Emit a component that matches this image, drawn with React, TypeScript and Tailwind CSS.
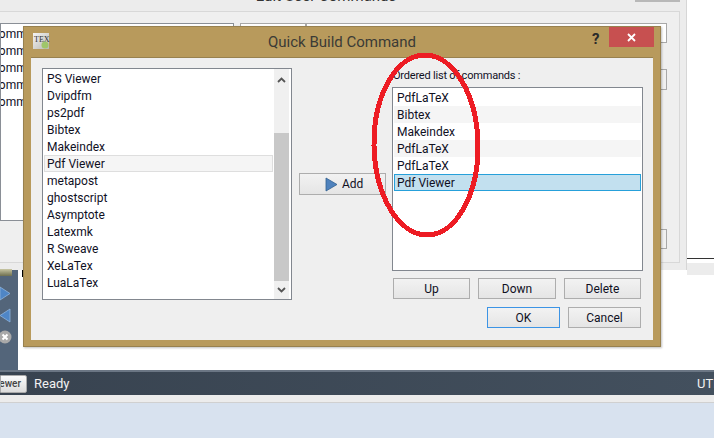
import React from 'react';

const FONT = "font-['Roboto','Noto_Sans',sans-serif]";

const AVAILABLE = ['PS Viewer', 'Dvipdfm', 'ps2pdf', 'Bibtex', 'Makeindex', 'Pdf Viewer', 'metapost', 'ghostscript', 'Asymptote', 'Latexmk', 'R Sweave', 'XeLaTex', 'LuaLaTex'];
const ORDERED = ['PdfLaTeX', 'Bibtex', 'Makeindex', 'PdfLaTeX', 'PdfLaTeX', 'Pdf Viewer'];

const Button = ({ label, className }: { label: string; className: string }) => (
  <button className={`flex items-center justify-center border bg-gradient-to-b from-[#f2f2f2] to-[#e5e5e5] text-[12px] text-[#10101f] ${className}`}>{label}</button>
);

const BackWindow = () => (
  <div className="relative flex h-[270px] w-[687px] flex-col border-r border-[#d6d6d6] bg-[#ececec]">
    <div className="relative flex h-[11px] items-end justify-center overflow-hidden pb-[5px] pr-[34px] text-[15px] leading-[20px] text-[#333]">
      <span>Edit User Commands</span>
      <div className="absolute right-[6px] top-0 h-[2px] w-[45px] bg-[#b8b8b8]" />
    </div>
    <div className="mr-[6px] h-[252px] border-r border-t border-b border-[#d8d8d8] bg-[#efefef] pt-[11px]">
      <div className="flex gap-[6px]">
        <div className="h-[198px] w-[234px] overflow-hidden border border-[#8a8f96] bg-white pt-[2px] text-[12px] text-[#10101f]">
          {[1, 2, 3, 4, 5].map((n) => (
            <div key={n} className="-ml-[10px] h-[17px] whitespace-nowrap leading-[17px]">Commands {n}</div>
          ))}
        </div>
        <div className="flex w-[427px] flex-col">
          <div className="flex h-[20px] gap-0">
            <div className="w-[66px] border border-[#a8a8a8] bg-white" />
            <div className="flex-1 border border-[#a8a8a8] bg-white" />
          </div>
          <div className="ml-auto mt-[26px] h-[21px] w-[100px] border border-[#a8a8a8] bg-[#f0f0f0]" />
          <div className="ml-auto mt-[139px] h-[20px] w-[100px] border border-[#a8a8a8] bg-[#f0f0f0]" />
        </div>
      </div>
    </div>
  </div>
);

const SidePanel = () => (
  <div className="relative flex h-[100px]">
    <div className="flex w-[18px] flex-col items-start gap-[7px] bg-[#53657a] pt-[16px]">
      <svg width="11" height="15" viewBox="0 0 11 15"><path d="M0 1 L10 7.5 L0 14 Z" fill="#4f86c6" stroke="#8fb4dd" strokeWidth="0.8" /></svg>
      <svg width="11" height="15" viewBox="0 0 11 15"><path d="M10 1 L0 7.5 L10 14 Z" fill="#4f86c6" stroke="#8fb4dd" strokeWidth="0.8" /></svg>
      <svg width="13" height="14" viewBox="0 0 13 14">
        <circle cx="5" cy="7" r="6.5" fill="#a9a9a9" />
        <path d="M2.5 4.5 L7.5 9.5 M7.5 4.5 L2.5 9.5" stroke="#fff" strokeWidth="2" />
      </svg>
    </div>
    <div className="flex-1 bg-white pl-[4px]">
      <div className="h-[7px] w-[1px] bg-black" />
    </div>
    <div className="absolute -top-[1px] left-0 h-[7px] w-[12px] bg-gradient-to-b from-[#c9c7a4] to-[#6f7050]" />
  </div>
);

const StatusBar = () => (
  <div className="flex h-[25px] items-center justify-between border-t-2 border-[#6b7684] bg-gradient-to-r from-[#384350] to-[#43505e] text-[14px] text-[#f2f2f2]">
    <div className="flex items-center">
      <div className="flex h-[18px] w-[27px] items-center justify-end overflow-hidden rounded-r-[2px] border border-[#aaa] bg-gradient-to-b from-[#fbfbfb] to-[#dcdcdc] pr-[5px] text-[10px] font-medium text-[#444]">
        <span className="whitespace-nowrap">Viewer</span>
      </div>
      <span className="ml-[7px] text-[13px]">Ready</span>
    </div>
    <span className="w-[17px] overflow-hidden whitespace-nowrap text-[13px]">UTF-8</span>
  </div>
);

const Dialog = () => (
  <div className="absolute left-[23px] top-[26px] flex h-[321px] w-[638px] flex-col border border-[#98814f] bg-[#b89a5c] shadow-[1px_1px_2px_rgba(0,0,0,0.25)]">
    <div className="relative flex h-[30px] items-center justify-center text-[15px] text-[#3b3b36]">
      <svg width="17" height="17" viewBox="0 0 17 17" className="absolute left-[9px] top-[6px]">
        <defs>
          <linearGradient id="texBg" x1="0" y1="0" x2="1" y2="1">
            <stop offset="0" stopColor="#f4f4f4" />
            <stop offset="1" stopColor="#b9b9b2" />
          </linearGradient>
        </defs>
        <rect width="16" height="16" fill="url(#texBg)" />
        <text x="1" y="9" fontSize="8" fontFamily="'Liberation Serif', serif" fill="#333">TEX</text>
        <circle cx="12" cy="12" r="3.5" fill="#9fc66a" />
      </svg>
      <span>Quick Build Command</span>
      <span className="absolute left-[568px] top-[1px] text-[15px] font-bold text-[#2a2a2a]">?</span>
      <div className="absolute right-[6px] top-0 flex h-[20px] w-[45px] items-center justify-center bg-[#c75050]">
        <svg width="9" height="9" viewBox="0 0 9 9"><path d="M1 1 L8 8 M8 1 L1 8" stroke="#fff" strokeWidth="1.8" /></svg>
      </div>
    </div>

    <div className="mx-[7px] flex h-[283px] border-t border-[#98814f] bg-[#efefef] pl-[11px] pt-[10px]">
      <div className="relative h-[232px] w-[250px] shrink-0 border border-[#82878f] bg-white pl-[1px] pt-[1px]">
        {AVAILABLE.map((name, i) => (
          <div key={name} className={`h-[17px] w-[229px] text-[12px] text-[#10101f] ${i === 5 ? 'border border-[#dedede] bg-[#f5f5f5] pl-[2px] leading-[16px]' : 'pl-[3px] leading-[18px]'}`}>
            {name}
          </div>
        ))}
        <div className="absolute bottom-0 right-[2px] top-0 flex w-[15px] flex-col items-center bg-[#f0f0f0]">
          <svg width="9" height="20" viewBox="0 0 9 20" className="shrink-0"><path d="M1 13 L4.5 9.5 L8 13" fill="none" stroke="#555" strokeWidth="1.8" /></svg>
          <div className="mt-[44px] h-[148px] w-full shrink-0 bg-[#c8c8c8]" />
          <svg width="9" height="18" viewBox="0 0 9 18" className="shrink-0"><path d="M1 7 L4.5 10.5 L8 7" fill="none" stroke="#555" strokeWidth="1.8" /></svg>
        </div>
      </div>

      <div className="ml-[7px] flex w-[87px] shrink-0 flex-col pt-[105px]">
        <button className="relative flex h-[22px] w-[87px] items-center border border-[#adadad] bg-gradient-to-b from-[#f2f2f2] to-[#e5e5e5] pl-[42px] text-[12px] text-[#10101f]">
          Add
          <svg width="13" height="15" viewBox="0 0 13 15" className="absolute left-[25px] top-[3px]">
            <path d="M1 1 L12 7.5 L1 14 Z" fill="#4f82bd" stroke="#30608f" strokeWidth="0.8" />
          </svg>
        </button>
      </div>

      <div className="ml-[6px] flex w-[251px] shrink-0 flex-col">
        <div className="ml-[1px] h-[19px] text-[11px] leading-[15px] tracking-[-0.2px] text-[#10101f]">Ordered list of commands :</div>
        <div className="h-[184px] border border-[#82878f] bg-white px-[1px] pt-[1px]">
          {ORDERED.map((name, i) => (
            <div
              key={i}
              className={`h-[17px] text-[12px] text-[#10101f] ${i === 5 ? 'border border-[#26a0da] bg-[#c2e0ef] pl-[2px] leading-[16px]' : i % 2 === 1 ? 'bg-[#f5f5f5] pl-[3px] leading-[18px]' : 'pl-[3px] leading-[18px]'}`}
            >
              {name}
            </div>
          ))}
        </div>
        <div className="mt-[7px] flex gap-[8px] pl-[1px]">
          <Button label="Up" className="h-[21px] w-[77px] border-[#adadad]" />
          <Button label="Down" className="h-[21px] w-[78px] border-[#adadad]" />
          <Button label="Delete" className="h-[21px] w-[77px] border-[#adadad]" />
        </div>
        <div className="mt-[8px] flex justify-end gap-[8px] pr-[2px]">
          <Button label="OK" className="h-[21px] w-[73px] border-[#3c94e5]" />
          <Button label="Cancel" className="h-[21px] w-[73px] border-[#adadad]" />
        </div>
      </div>
    </div>
  </div>
);

const App: React.FC = () => {
  return (
    <div className={`relative h-[438px] w-[714px] overflow-hidden bg-white ${FONT}`}>
      <div className="flex h-[370px]">
        <div className="w-[687px]">
          <BackWindow />
          <SidePanel />
        </div>
        <div className="flex-1">
          <div className="mt-[258px] h-[1px] bg-[#333]" />
          <div className="mt-[4px] h-[12px] bg-[#ececec]" />
        </div>
      </div>
      <StatusBar />
      <div className="h-[8px] border-b border-[#d0d0d0] bg-[#ececec]" />
      <div className="h-[35px] bg-[#d8e2ef]" />

      <Dialog />

      {/* hand-drawn red ring */}
      <svg width="714" height="438" viewBox="0 0 714 438" className="pointer-events-none absolute left-0 top-0" shapeRendering="crispEdges">
        <ellipse cx="426" cy="145" rx="52" ry="90" fill="none" stroke="#ed1c24" strokeWidth="5" transform="rotate(-1 426 145)" />
      </svg>
    </div>
  );
};

export default App;
